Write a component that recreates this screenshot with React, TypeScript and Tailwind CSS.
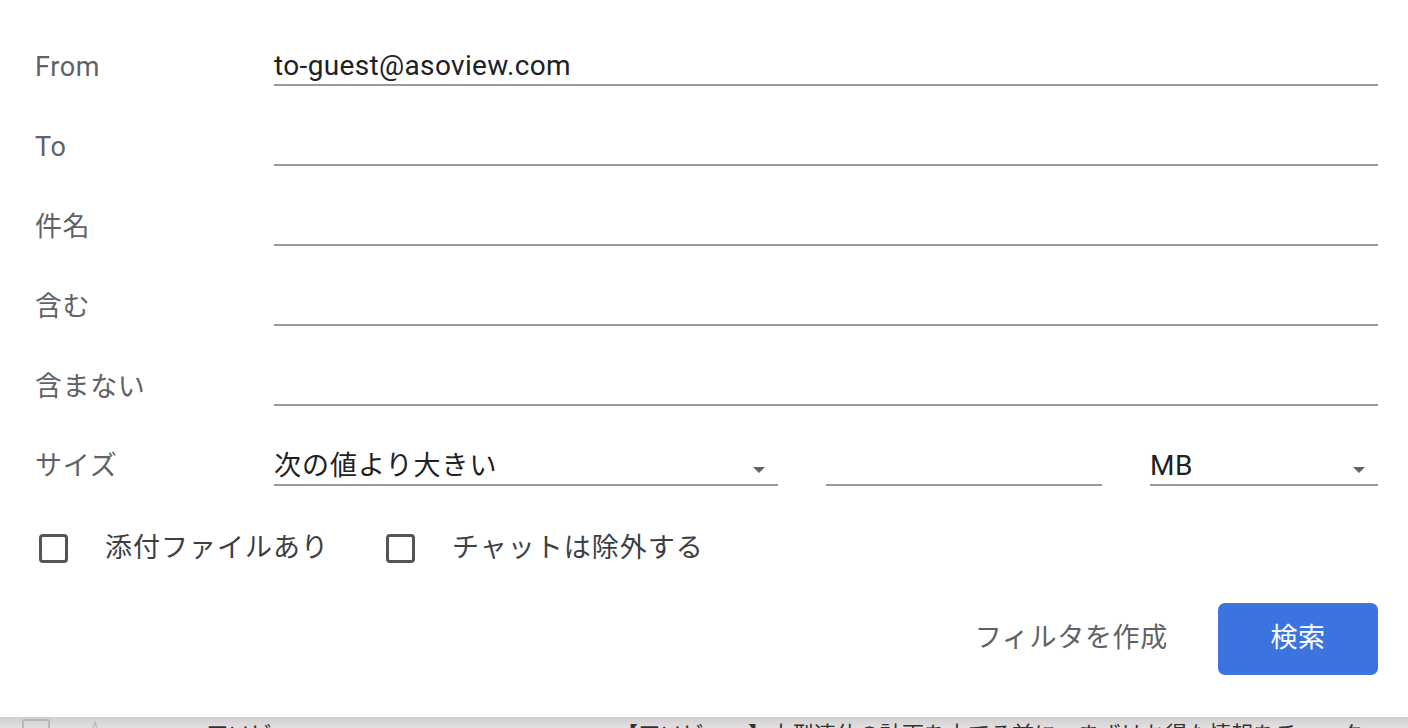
import * as React from "react"

const font = { fontFamily: 'Roboto, "Noto Sans CJK JP", sans-serif' }

function Row({ label, value }: { label: string; value?: string }) {
    return (
        <div className="flex items-end h-[80px]">
            <div className="w-[239px] shrink-0 pb-[1px] text-[27px] leading-[36px] tracking-[0.6px] text-[#5f6368]">{label}</div>
            <div className="flex-1 h-[38px] border-b-2 border-[#9a9a9a] text-[28px] leading-[36px] tracking-[0.35px] text-[#202124]">
                {value}
            </div>
        </div>
    )
}

function Arrow() {
    return (
        <svg width="14" height="8" viewBox="0 0 14 8" className="mb-[10px]">
            <path d="M1 1 L13 1 L7 7 Z" fill="#5f6368" />
        </svg>
    )
}

function Check({ label }: { label: string }) {
    return (
        <div className="flex items-center">
            <div className="w-[29px] h-[29px] rounded-[4px] border-[3px] border-[#555555] box-border" />
            <span className="ml-[37px] text-[27px] tracking-[1px] text-[#3c4043]">{label}</span>
        </div>
    )
}

export default function App() {
    return (
        <div className="w-[1408px] h-[728px] bg-white overflow-hidden flex flex-col" style={font}>
            {/* --- FORM --- */}
            <div className="pl-[35px] pr-[30px] pt-[6px]">
                <Row label="From" value="to-guest@asoview.com" />
                <Row label="To" />
                <Row label="件名" />
                <Row label="含む" />
                <Row label="含まない" />

                {/* サイズ */}
                <div className="flex items-end h-[80px]">
                    <div className="w-[239px] shrink-0 pb-[2px] text-[27px] leading-[36px] tracking-[0.8px] text-[#5f6368]">サイズ</div>
                    <div className="w-[504px] h-[38px] border-b-2 border-[#9a9a9a] flex items-end justify-between pr-[12px]">
                        <span className="text-[27px] leading-[36px] tracking-[1px] text-[#202124]">次の値より大きい</span>
                        <Arrow />
                    </div>
                    <div className="ml-[48px] w-[276px] h-[38px] border-b-2 border-[#9a9a9a]" />
                    <div className="ml-[48px] flex-1 h-[38px] border-b-2 border-[#9a9a9a] flex items-end justify-between pr-[12px]">
                        <span className="text-[28px] leading-[36px] tracking-[0.5px] text-[#202124]">MB</span>
                        <Arrow />
                    </div>
                </div>
            </div>

            {/* checkboxes */}
            <div className="flex items-center gap-[57px] pl-[39px] mt-[42px]">
                <Check label="添付ファイルあり" />
                <Check label="チャットは除外する" />
            </div>

            {/* buttons */}
            <div className="flex items-center justify-end pr-[30px] mt-[34px] gap-[50px]">
                <span className="text-[27px] tracking-[0.7px] text-[#5f6368]">フィルタを作成</span>
                <button className="w-[160px] h-[72px] rounded-[7px] bg-[#3b74df] text-white text-[27px] tracking-[0.5px]">検索</button>
            </div>

            {/* list behind the dialog, cut off */}
            <div className="mt-auto h-[11px] overflow-hidden bg-gradient-to-b from-[#d0cece] to-[#e2e0e0] flex items-start">
                <div className="ml-[22px] mt-[2px] w-[28px] h-[16px] border-[2px] border-[#b8b8b8] rounded-[2px]" />
                <span className="ml-[34px] mt-[-2px] text-[22px] text-[#b0b0b0]">☆</span>
                <span className="ml-[100px] mt-[7px] text-[22px] leading-[22px] text-[#333]">アソビュー</span>
                <span className="ml-[300px] mt-[7px] text-[22px] leading-[22px] text-[#333]">【アソビュー】大型連休の計画を立てる前に、まずはお得な情報をチェック</span>
            </div>
        </div>
    )
}
